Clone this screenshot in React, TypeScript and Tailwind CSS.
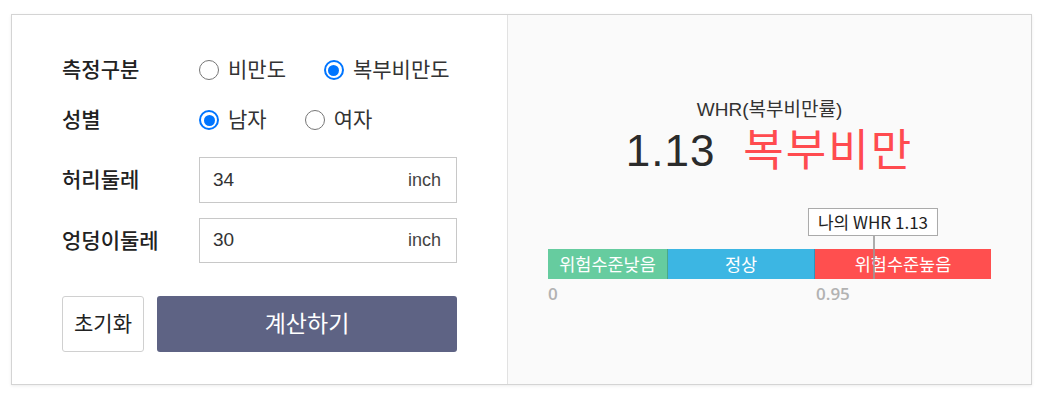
const font = "font-['Liberation_Sans','Noto_Sans_CJK_KR',sans-serif]";

type Opt = { label: string; checked: boolean };

const Radio = ({ checked }: { checked: boolean }) =>
	checked ? (
		<span className="flex h-5 w-5 items-center justify-center rounded-full border-2 border-[#0075ff] bg-white">
			<span className="h-[11px] w-[11px] rounded-full bg-[#0075ff]" />
		</span>
	) : (
		<span className="h-5 w-5 rounded-full border border-[#767676] bg-white" />
	);

const RadioRow = ({ title, options }: { title: string; options: Opt[] }) => (
	<div className="flex h-10 items-center">
		<div className="w-[137px] text-[21px] font-medium text-[#222]">{title}</div>
		<div className="flex items-center gap-[38px]">
			{options.map((o) => (
				<label key={o.label} className="flex items-center gap-[9px] text-[21px] text-[#333]">
					<Radio checked={o.checked} />
					<span>{o.label}</span>
				</label>
			))}
		</div>
	</div>
);

const InputRow = ({ title, value, h }: { title: string; value: string; h: string }) => (
	<div className="flex items-center">
		<div className="w-[137px] text-[21px] font-medium text-[#222]">{title}</div>
		<div
			className={`flex w-[258px] items-center justify-between border border-[#c8c8c8] bg-white pl-[13px] pr-[15px] text-[19px] text-[#333] ${h}`}
		>
			<span>{value}</span>
			<span className="text-[18px] text-[#444]">inch</span>
		</div>
	</div>
);

export default function App() {
	return (
		<div className={`min-h-[400px] bg-white pl-[11px] pt-[14px] ${font}`}>
			<div className="flex h-[371px] w-[1021px] border border-[#d4d4d4] shadow-[0_1px_3px_rgba(0,0,0,0.08)]">
				{/* form */}
				<div className="flex w-[496px] flex-col border-r border-[#e2e2e2] bg-white pl-[50px] pt-[35px]">
					<RadioRow
						title="측정구분"
						options={[
							{ label: "비만도", checked: false },
							{ label: "복부비만도", checked: true },
						]}
					/>
					<div className="mt-[10px]">
						<RadioRow
							title="성별"
							options={[
								{ label: "남자", checked: true },
								{ label: "여자", checked: false },
							]}
						/>
					</div>
					<div className="mt-[17px]">
						<InputRow title="허리둘레" value="34" h="h-[46px]" />
					</div>
					<div className="mt-[15px]">
						<InputRow title="엉덩이둘레" value="30" h="h-[45px]" />
					</div>
					<div className="mt-[33px] flex gap-[13px]">
						<button className="h-14 w-[82px] rounded-[3px] border border-[#d0d0d0] bg-white text-[21px] text-[#222]">
							초기화
						</button>
						<button className="h-14 w-[300px] rounded-[3px] bg-[#5e6384] text-[23px] text-white">
							계산하기
						</button>
					</div>
				</div>

				{/* result */}
				<div className="flex flex-1 flex-col items-center bg-[#fafafa] pt-[83px]">
					<div className="text-[19px] leading-6 text-[#333]">WHR(복부비만률)</div>
					<div className="mt-[5px] flex h-12 items-center gap-[28px] text-[44px] leading-[48px]">
						<span className="tracking-[1px] text-[#2b2b2b]">1.13</span>
						<span className="tracking-[2px] text-[#ff4b4f]">복부비만</span>
					</div>

					<div className="mt-[33px] w-[443px]">
						<div className="relative h-[41px]">
							<div className="absolute left-[325px] top-0 -translate-x-1/2 whitespace-nowrap border border-[#aaa] bg-white px-[9px] text-[17px] leading-[26px] text-[#222] font-['Noto_Sans_CJK_KR',sans-serif]">
								나의 WHR 1.13
							</div>
						</div>
						<div className="relative flex h-[30px] text-[17.5px] text-white font-['Noto_Sans_CJK_KR',sans-serif]">
							<div className="flex w-[120px] items-center justify-center border-r border-[#4ba88a] bg-[#66cc9f]">
								위험수준낮음
							</div>
							<div className="flex w-[147px] items-center justify-center border-r border-[#2f95bc] bg-[#3cb6e3]">
								정상
							</div>
							<div className="flex flex-1 items-center justify-center bg-[#ff4f4f]">위험수준높음</div>
							<div className="absolute bottom-0 left-[325px] top-[-13px] w-[2px] bg-[#999] opacity-80" />
						</div>
						<div className="relative mt-[3px] h-6 text-[17px] font-semibold leading-6 text-[#b2b2b2] font-['Open_Sans',sans-serif]">
							<span className="absolute left-0 top-0">0</span>
							<span className="absolute left-[268px] top-0">0.95</span>
						</div>
					</div>
				</div>
			</div>
		</div>
	);
}
